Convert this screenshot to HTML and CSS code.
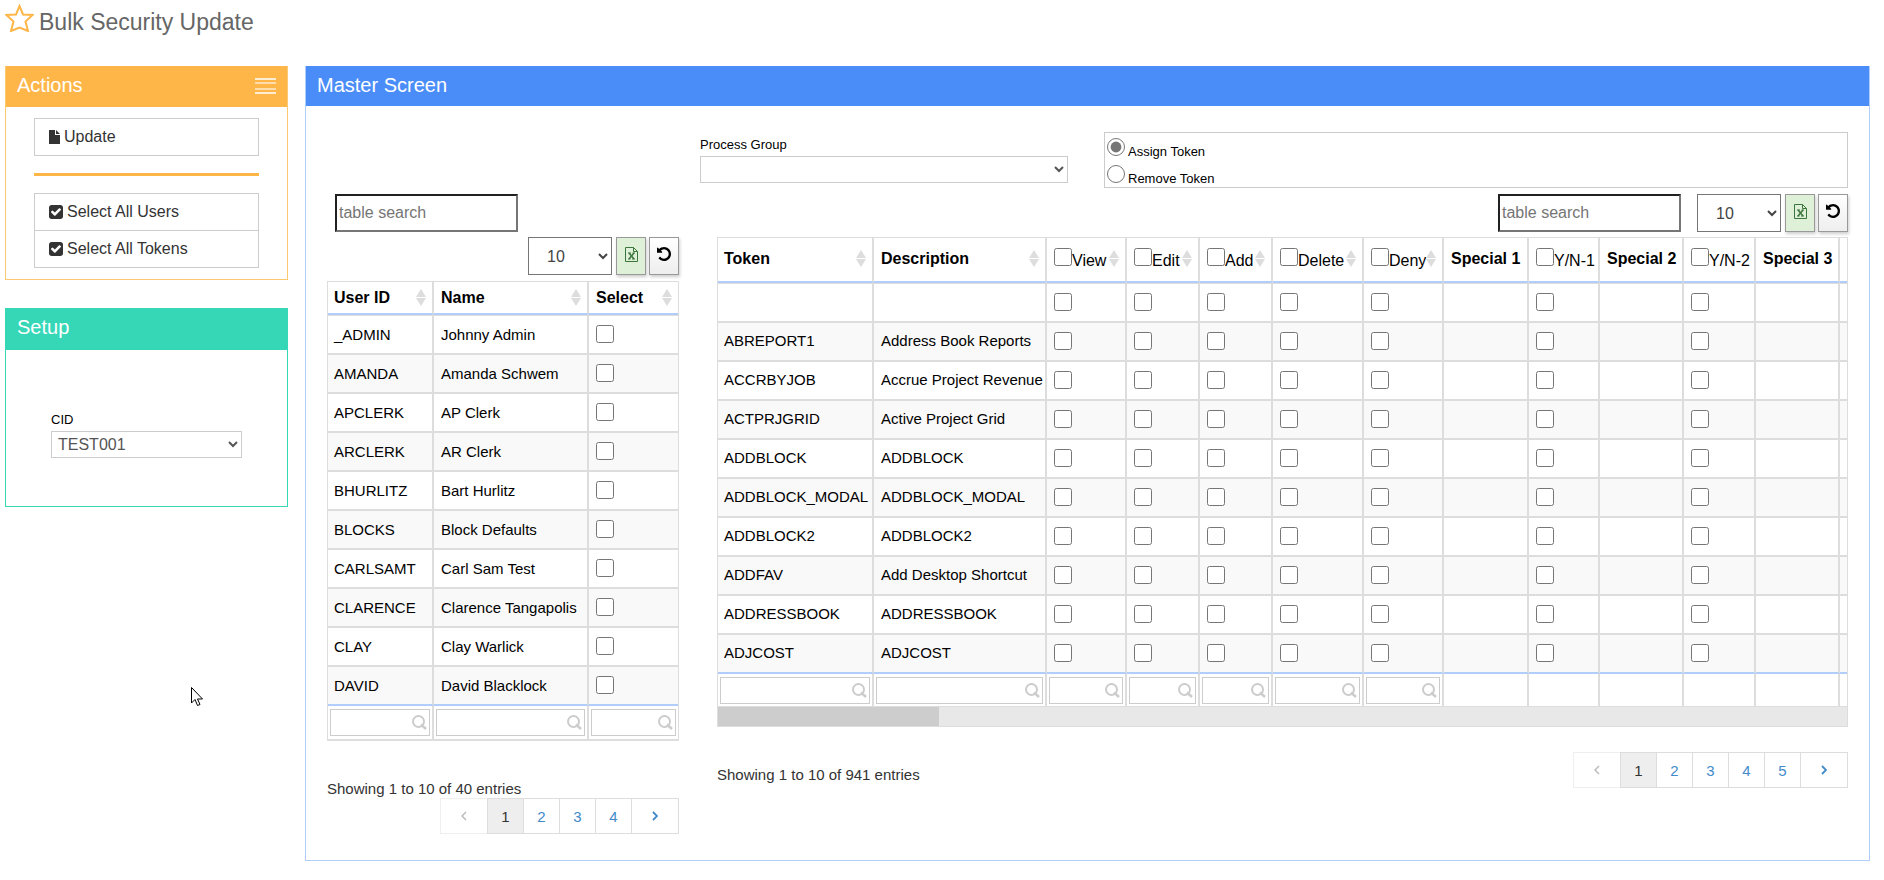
FILE: index.html
```html
<!DOCTYPE html>
<html lang="en">
<head>
    <meta charset="UTF-8">
    <meta name="viewport" content="width=device-width, initial-scale=1.0">
    <title>Bulk Security Update</title>
    <link rel="stylesheet" href="styles.css">
</head>
<body>
    <!-- Shared icons -->
    <svg class="icon-defs" width="0" height="0">
        <symbol id="icon-file" viewBox="0 0 11 14">
            <path d="M0 0h6v5h5v9H0z M7 0l4 4H7z"/>
        </symbol>
        <symbol id="icon-check" viewBox="128 128 1536 1536">
            <path d="M813 1299l614-614q19-19 19-45t-19-45l-102-102q-19-19-45-19t-45 19l-467 467-211-211q-19-19-45-19t-45 19l-102 102q-19 19-19 45t19 45l358 358q19 19 45 19t45-19zm851-883v960q0 119-84.5 203.5t-203.5 84.5h-960q-119 0-203.5-84.5t-84.5-203.5v-960q0-119 84.5-203.5t203.5-84.5h960q119 0 203.5 84.5t84.5 203.5z"/>
        </symbol>
        <symbol id="icon-excel" viewBox="0 0 13 15">
            <path d="M.5.5h8l4 4v10H.5z M8.500.5v4h4" fill="none" stroke="currentColor"/>
            <path d="M4 6l5 6M9 6l-5 6" fill="none" stroke="currentColor" stroke-width="1.500"/>
            <path d="M3 6h3M7.500 6h2.500M3 12h2.500M7 12h3" fill="none" stroke="currentColor"/>
        </symbol>
        <symbol id="icon-undo" viewBox="0 128 1536 1536">
            <path d="M1536 896q0 156-61 298t-164 245-245 164-298 61q-172 0-327-72.5t-264-204.5q-7-10-6.500-22.500t8.500-20.500l137-138q10-9 25-9 16 2 23 12 73 95 179 147t225 52q104 0 198.500-40.500t163.500-109.500 109.500-163.500 40.500-198.500-40.500-198.500-109.500-163.500-163.500-109.500-198.500-40.500q-98 0-188 35.500t-160 101.500l137 138q31 30 14 69-17 40-59 40h-448q-26 0-45-19t-19-45v-448q0-42 40-59 39-17 69 14l130 129q107-101 244.500-156.500t284.500-55.500q156 0 298 61t245 164 164 245 61 298z"/>
        </symbol>
        <symbol id="icon-search" viewBox="0 0 15 15">
            <circle cx="6.500" cy="6.500" r="5.500" fill="none" stroke="currentColor" stroke-width="2"/>
            <path d="M9 9.500l5 4.500" fill="none" stroke="currentColor" stroke-width="2.500"/>
        </symbol>
        <symbol id="icon-prev" viewBox="0 0 6 10">
            <path d="M5 1L1 5l4 4" fill="none" stroke="currentColor" stroke-width="1.500"/>
        </symbol>
        <symbol id="icon-next" viewBox="0 0 6 10">
            <path d="M1 1l4 4-4 4" fill="none" stroke="currentColor" stroke-width="1.800"/>
        </symbol>
    </svg>

    <header class="page-header">
        <svg class="star" viewBox="0 0 29 28"><path d="M14.500 2l3.500 8.500 9.500.5-7 6.500 2.500 9.500-8.500-3.500-8.500 3.500 2.500-9.500-7-6.500 9.500-.5z"/></svg>
        <h1 class="page-title">Bulk Security Update</h1>
    </header>

    <div class="page">
        <aside class="sidebar">
            <section class="panel panel-actions">
                <div class="panel-header">
                    <h2>Actions</h2>
                    <svg class="menu-icon" viewBox="0 0 21 16">
                        <path d="M0 1h21M0 15h21" stroke="#fff" stroke-width="1.500"/>
                        <path d="M0 5h21M0 11h21" stroke="#fff" stroke-width="1.500" opacity="0.700"/>
                    </svg>
                </div>
                <div class="actions">
                    <button class="action-btn"><svg class="icon-file"><use href="#icon-file"/></svg>Update</button>
                    <hr class="divider">
                    <button class="action-btn"><svg class="icon-check"><use href="#icon-check"/></svg>Select All Users</button>
                    <button class="action-btn"><svg class="icon-check"><use href="#icon-check"/></svg>Select All Tokens</button>
                </div>
            </section>

            <section class="panel panel-setup">
                <div class="panel-header"><h2>Setup</h2></div>
                <div class="setup">
                    <label class="field-label" for="cid">CID</label>
                    <select class="field-select" id="cid"><option>TEST001</option></select>
                </div>
            </section>
        </aside>

        <main class="panel panel-master">
            <div class="panel-header"><h2>Master Screen</h2></div>
            <div class="master-body">
                <div class="filters">
                    <div class="process-group">
                        <label class="field-label" for="process-group">Process Group</label>
                        <select class="field-select" id="process-group"><option></option></select>
                    </div>
                    <div class="token-mode">
                        <label><input type="radio" name="mode" checked>Assign Token</label>
                        <label><input type="radio" name="mode">Remove Token</label>
                    </div>
                </div>

                <div class="tables">
                    <section class="users">
                        <input class="search" type="text" placeholder="table search" aria-label="Search users">
                        <div class="tools">
                            <select class="page-size" aria-label="Users per page"><option>10</option></select>
                            <button class="tool-btn excel" aria-label="Export users"><svg><use href="#icon-excel"/></svg></button>
                            <button class="tool-btn reset" aria-label="Reset users"><svg><use href="#icon-undo"/></svg></button>
                        </div>
                        <div class="table-wrap">
                            <table class="grid" id="users-table">
                                <colgroup><col class="w106"><col class="w155"><col></colgroup>
                                <thead></thead>
                                <tbody></tbody>
                                <tfoot></tfoot>
                            </table>
                        </div>
                        <div class="table-footer">
                            <p class="info">Showing 1 to 10 of 40 entries</p>
                            <nav class="pager">
                                <a class="arrow disabled" aria-label="Previous"><svg><use href="#icon-prev"/></svg></a>
                                <a class="active" href="#">1</a>
                                <a href="#">2</a>
                                <a href="#">3</a>
                                <a href="#">4</a>
                                <a class="arrow" href="#" aria-label="Next"><svg><use href="#icon-next"/></svg></a>
                            </nav>
                        </div>
                    </section>

                    <section class="tokens">
                        <div class="tools">
                            <input class="search" type="text" placeholder="table search" aria-label="Search tokens">
                            <select class="page-size" aria-label="Tokens per page"><option>10</option></select>
                            <button class="tool-btn excel" aria-label="Export tokens"><svg><use href="#icon-excel"/></svg></button>
                            <button class="tool-btn reset" aria-label="Reset tokens"><svg><use href="#icon-undo"/></svg></button>
                        </div>
                        <div class="table-wrap">
                            <table class="grid" id="tokens-table">
                                <colgroup>
                                    <col class="w156"><col class="w173"><col class="w80"><col class="w73"><col class="w73"><col class="w91"><col class="w80">
                                    <col class="w85"><col class="w71"><col class="w84"><col class="w72"><col class="w84"><col class="w72">
                                </colgroup>
                                <thead></thead>
                                <tbody></tbody>
                                <tfoot></tfoot>
                            </table>
                            <div class="scroll-track"><div class="scroll-thumb"></div></div>
                        </div>
                        <div class="table-footer">
                            <p class="info">Showing 1 to 10 of 941 entries</p>
                            <nav class="pager">
                                <a class="arrow disabled" aria-label="Previous"><svg><use href="#icon-prev"/></svg></a>
                                <a class="active" href="#">1</a>
                                <a href="#">2</a>
                                <a href="#">3</a>
                                <a href="#">4</a>
                                <a href="#">5</a>
                                <a class="arrow" href="#" aria-label="Next"><svg><use href="#icon-next"/></svg></a>
                            </nav>
                        </div>
                    </section>
                </div>
            </div>
        </main>
    </div>

    <svg class="cursor" viewBox="0 0 12 19"><path d="M.5.5v15.500l3.500-3.500 2.500 6 2.500-1-2.500-5.500h5z" fill="#fff" stroke="#000"/></svg>

    <script src="script.js"></script>
</body>
</html>
```

FILE: styles.css
```css
* {
    box-sizing: border-box;
}

body {
    margin: 0;
    font-family: "Liberation Sans", Arial, sans-serif;
    font-size: 15px;
    color: #333;
    background: #fff;
}

svg {
    display: block;
    fill: currentColor;
}

.icon-defs {
    position: absolute;
}

button, input, select {
    font-family: inherit;
}

/* Page header */
.page-header {
    display: flex;
    align-items: flex-start;
    gap: 5px;
    height: 66px;
    padding: 4px 5px;
}

.star {
    width: 29px;
    height: 28px;
    fill: none;
    stroke: #ffb648;
    stroke-width: 2px;
}

.page-title {
    margin: 4px 0 0;
    font-size: 23px;
    font-weight: 400;
    line-height: 28px;
    color: #666;
}

.page {
    display: flex;
    align-items: flex-start;
    gap: 17px;
    padding: 0 14px 19px 5px;
}

.sidebar {
    flex: 0 0 283px;
}

/* Panels */
.panel {
    border: 1px solid;
    border-top: 0;
}

.panel-actions {
    border-color: #fcc871;
    margin-bottom: 28px;
}

.panel-setup {
    border-color: #36d7b7;
}

.panel-master {
    flex: 1;
    min-width: 0;
    border-color: #b1cdf9;
}

.panel-header {
    display: flex;
    justify-content: space-between;
    align-items: center;
    height: 41px;
    padding: 0 11px 2px;
    color: #fff;
    background: #ffb648;
}

.panel-setup .panel-header {
    height: 42px;
    padding-bottom: 4px;
    background: #36d7b7;
}

.panel-master .panel-header {
    height: 40px;
    background: #4b8df8;
}

.panel-header h2 {
    margin: 0;
    font-size: 20px;
    font-weight: 400;
}

.menu-icon {
    width: 21px;
    height: 16px;
}

/* Actions */
.actions {
    padding: 11px 28px;
}

.action-btn {
    display: flex;
    align-items: center;
    gap: 4px;
    width: 100%;
    height: 38px;
    padding: 0 14px;
    border: 1px solid #ccc;
    background: #fff;
    font-size: 16px;
    color: #333;
}

.action-btn + .action-btn {
    margin-top: -1px;
}

.icon-file {
    width: 11px;
    height: 14px;
}

.icon-check {
    width: 14px;
    height: 14px;
}

.divider {
    height: 3px;
    margin: 17px 0;
    border: 0;
    background: #ffb648;
}

/* Form fields */
.setup {
    padding: 61px 45px 48px;
}

.field-label {
    display: block;
    font-size: 13px;
    line-height: 18px;
    color: #000;
}

.field-select {
    display: block;
    width: 100%;
    height: 27px;
    margin-top: 2px;
    padding: 0 2px;
    border: 1px solid #ccc;
    border-radius: 0;
    background-color: #fff;
    font-size: 16px;
    color: #555;
}

.master-body {
    padding: 26px 21px;
}

.filters {
    display: flex;
    gap: 36px;
    padding-left: 373px;
}

.process-group {
    flex: 0 0 368px;
    padding-top: 4px;
}

.token-mode {
    flex: 1;
    border: 1px solid #ccc;
    padding-left: 2px;
}

.token-mode label {
    display: flex;
    align-items: baseline;
    gap: 3px;
    height: 27px;
    padding-top: 5px;
    font-size: 13px;
    color: #000;
}

.token-mode input {
    width: 18px;
    height: 18px;
    margin: 0;
    accent-color: #767676;
}

/* Table toolbars */
.tables {
    display: flex;
    align-items: flex-start;
    gap: 38px;
    margin-top: 6px;
}

.users {
    flex: 0 0 352px;
}

.tokens {
    flex: 1;
    min-width: 0;
}

.tools {
    display: flex;
    justify-content: flex-end;
    gap: 3px;
}

.search {
    display: block;
    width: 183px;
    height: 38px;
    padding: 1px 2px;
    border: 2px inset #767676;
    background: #fff;
    font-size: 16px;
}

.users .search {
    margin: 0 0 5px 8px;
}

.tokens .search {
    margin-right: 13px;
}

.page-size {
    width: 84px;
    height: 38px;
    margin-right: 1px;
    padding: 0 2px 0 14px;
    border: 1px solid #767676;
    border-radius: 0;
    background-color: #fff;
    font-size: 16px;
    color: #444;
}

.tool-btn {
    display: flex;
    justify-content: center;
    width: 30px;
    height: 38px;
    padding: 9px 0 0;
    border: 1px solid #999;
    background: linear-gradient(#fff, #eee);
    box-shadow: 1px 2px 3px rgba(0, 0, 0, 0.2);
    color: #000;
}

.excel {
    background: #dff0d8;
    color: #3c763d;
}

.excel svg {
    width: 13px;
    height: 15px;
}

.reset svg {
    width: 14px;
    height: 14px;
}

/* Data tables */
.table-wrap {
    overflow: hidden;
    margin-top: 5px;
    border: 1px solid #ddd;
}

.users .table-wrap {
    margin-top: 6px;
    border-bottom-width: 2px;
}

.grid {
    width: 100%;
    table-layout: fixed;
    border-collapse: separate;
    border-spacing: 0;
    color: #000;
}

#tokens-table {
    width: 1194px;
}

.w71 { width: 71px; }
.w72 { width: 72px; }
.w73 { width: 73px; }
.w80 { width: 80px; }
.w84 { width: 84px; }
.w85 { width: 85px; }
.w91 { width: 91px; }
.w106 { width: 106px; }
.w155 { width: 155px; }
.w156 { width: 156px; }
.w173 { width: 173px; }

.grid th,
.grid td {
    padding: 0 6px 0 7px;
    border-right: 2px solid #ddd;
    text-align: left;
    white-space: nowrap;
}

.grid th:first-child,
.grid td:first-child {
    padding-left: 6px;
}

.grid th:last-child,
.grid td:last-child {
    border-right: 0;
}

.grid th {
    height: 33px;
    border-bottom: 2px solid #b1cdf9;
    font-size: 16px;
}

#tokens-table th {
    height: 45px;
    padding-bottom: 2px;
}

.grid tbody td {
    height: 39px;
    padding-bottom: 1px;
    border-bottom: 2px solid #ddd;
}

#tokens-table tbody td {
    padding-bottom: 2px;
}

.grid tbody tr:first-child td {
    height: 40px;
    border-top: 1px solid #ddd;
}

.grid tbody tr:last-child td {
    border-bottom-color: #b1cdf9;
}

.grid tbody tr:nth-child(even) {
    background: #f9f9f9;
}

.grid tfoot td,
.grid tfoot td:first-child {
    height: 33px;
    padding: 3px 2px;
}

#tokens-table tfoot td {
    height: 32px;
    padding-bottom: 2px;
}

.grid input[type="checkbox"] {
    display: block;
    width: 18px;
    height: 18px;
    margin: 0;
}

.th-inner {
    display: flex;
    align-items: center;
    justify-content: space-between;
}

.th-inner label {
    font-weight: 400;
}

.grid .th-inner input[type="checkbox"] {
    display: inline-block;
}

.sort {
    display: flex;
    flex-direction: column;
    gap: 1px;
}

.sort::before,
.sort::after {
    content: "";
    border: 0 solid transparent;
    border-width: 0 5px;
}

.sort::before {
    border-bottom: 8px solid #ddd;
}

.sort::after {
    border-top: 8px solid #ddd;
}

.col-filter {
    display: flex;
    align-items: center;
    height: 27px;
    padding-right: 2px;
    border: 1px solid #ccc;
    background: #fff;
    color: #ccc;
}

.col-filter input {
    flex: 1;
    min-width: 0;
    height: 25px;
    border: 0;
    outline: 0;
    background: transparent;
}

.col-filter svg {
    width: 15px;
    height: 15px;
}

.scroll-track {
    height: 20px;
    border-top: 1px solid #ddd;
    background: #e8e8e8;
}

.scroll-thumb {
    width: 221px;
    height: 100%;
    background: #cdcdcd;
}

/* Paging */
.info {
    margin: 0;
    line-height: 18px;
}

.users .table-footer {
    padding-top: 39px;
}

.tokens .table-footer {
    display: flex;
    justify-content: space-between;
    padding-top: 25px;
}

.tokens .info {
    padding-top: 14px;
}

.pager {
    display: flex;
    justify-content: flex-end;
}

.pager a {
    display: flex;
    align-items: center;
    justify-content: center;
    width: 37px;
    height: 36px;
    margin-left: -1px;
    border: 1px solid #ddd;
    color: #428bca;
    text-decoration: none;
}

.pager .arrow {
    width: 48px;
}

.pager .active {
    background: #eee;
    color: #333;
}

.pager .disabled {
    border-color: #eee;
    color: #bbb;
}

.pager svg {
    width: 6px;
    height: 10px;
}

.cursor {
    position: absolute;
    left: 191px;
    top: 687px;
    width: 12px;
    height: 19px;
}
```

FILE: script.js
```js
const users = [
    ['_ADMIN', 'Johnny Admin'],
    ['AMANDA', 'Amanda Schwem'],
    ['APCLERK', 'AP Clerk'],
    ['ARCLERK', 'AR Clerk'],
    ['BHURLITZ', 'Bart Hurlitz'],
    ['BLOCKS', 'Block Defaults'],
    ['CARLSAMT', 'Carl Sam Test'],
    ['CLARENCE', 'Clarence Tangapolis'],
    ['CLAY', 'Clay Warlick'],
    ['DAVID', 'David Blacklock']
];

const tokens = [
    ['', ''],
    ['ABREPORT1', 'Address Book Reports'],
    ['ACCRBYJOB', 'Accrue Project Revenue'],
    ['ACTPRJGRID', 'Active Project Grid'],
    ['ADDBLOCK', 'ADDBLOCK'],
    ['ADDBLOCK_MODAL', 'ADDBLOCK_MODAL'],
    ['ADDBLOCK2', 'ADDBLOCK2'],
    ['ADDFAV', 'Add Desktop Shortcut'],
    ['ADDRESSBOOK', 'ADDRESSBOOK'],
    ['ADJCOST', 'ADJCOST']
];

// check: column holds checkboxes, all: header has its own "select all" box
const userColumns = [
    { name: 'User ID', sort: true, filter: true },
    { name: 'Name', sort: true, filter: true },
    { name: 'Select', sort: true, filter: true, check: true }
];

const tokenColumns = [
    { name: 'Token', sort: true, filter: true },
    { name: 'Description', sort: true, filter: true },
    { name: 'View', sort: true, filter: true, check: true, all: true },
    { name: 'Edit', sort: true, filter: true, check: true, all: true },
    { name: 'Add', sort: true, filter: true, check: true, all: true },
    { name: 'Delete', sort: true, filter: true, check: true, all: true },
    { name: 'Deny', sort: true, filter: true, check: true, all: true },
    { name: 'Special 1' },
    { name: 'Y/N-1', check: true, all: true },
    { name: 'Special 2' },
    { name: 'Y/N-2', check: true, all: true },
    { name: 'Special 3' },
    { name: '' }
];

function renderTable(id, columns, rows) {
    const table = document.getElementById(id);

    table.tHead.innerHTML = '<tr>' + columns.map(col => {
        const title = col.all
            ? `<label><input type="checkbox">${col.name}</label>`
            : `<span>${col.name}</span>`;
        return `<th><div class="th-inner">${title}${col.sort ? '<span class="sort"></span>' : ''}</div></th>`;
    }).join('') + '</tr>';

    table.tBodies[0].innerHTML = rows.map(row => '<tr>' + columns.map((col, i) => {
        if (col.check) return `<td><input type="checkbox" aria-label="${col.name} ${row[0]}"></td>`;
        return `<td>${row[i] || ''}</td>`;
    }).join('') + '</tr>').join('');

    table.tFoot.innerHTML = '<tr>' + columns.map(col => {
        if (!col.filter) return '<td></td>';
        return `<td><div class="col-filter"><input type="text" aria-label="Filter ${col.name}"><svg><use href="#icon-search"/></svg></div></td>`;
    }).join('') + '</tr>';
}

renderTable('users-table', userColumns, users);
renderTable('tokens-table', tokenColumns, tokens);
```
